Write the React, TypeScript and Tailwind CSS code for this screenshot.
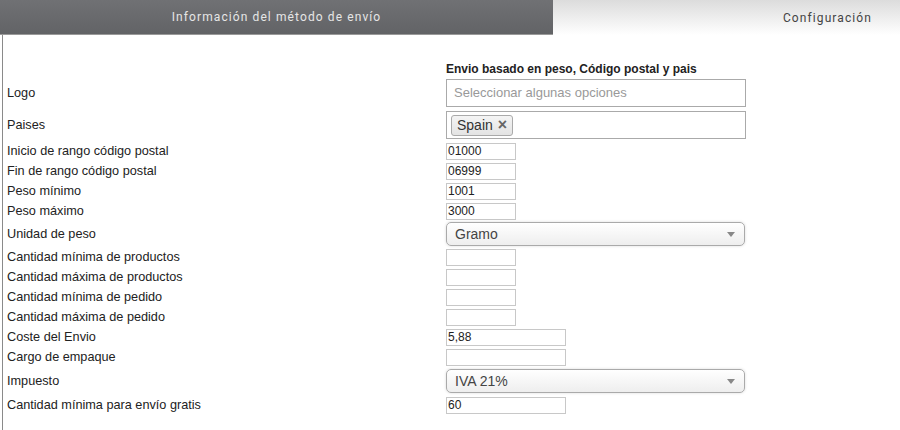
import React from 'react';

type Row = {
  label: string;
  kind: 'small' | 'medium' | 'select' | 'logo' | 'tags';
  value?: string;
  height: string;
};

const rows: Row[] = [
  { label: 'Logo', kind: 'logo', height: 'h-[32px]' },
  { label: 'Paises', kind: 'tags', height: 'h-[32px]' },
  { label: 'Inicio de rango código postal', kind: 'small', value: '01000', height: 'h-[20px]' },
  { label: 'Fin de rango código postal', kind: 'small', value: '06999', height: 'h-[20px]' },
  { label: 'Peso mínimo', kind: 'small', value: '1001', height: 'h-[20px]' },
  { label: 'Peso máximo', kind: 'small', value: '3000', height: 'h-[20px]' },
  { label: 'Unidad de peso', kind: 'select', value: 'Gramo', height: 'h-[26px]' },
  { label: 'Cantidad mínima de productos', kind: 'small', height: 'h-[20px]' },
  { label: 'Cantidad máxima de productos', kind: 'small', height: 'h-[20px]' },
  { label: 'Cantidad mínima de pedido', kind: 'small', height: 'h-[20px]' },
  { label: 'Cantidad máxima de pedido', kind: 'small', height: 'h-[20px]' },
  { label: 'Coste del Envio', kind: 'medium', value: '5,88', height: 'h-[20px]' },
  { label: 'Cargo de empaque', kind: 'medium', height: 'h-[20px]' },
  { label: 'Impuesto', kind: 'select', value: 'IVA 21%', height: 'h-[28px]' },
  { label: 'Cantidad mínima para envío gratis', kind: 'medium', value: '60', height: 'h-[20px]' },
];

const Control: React.FC<{ row: Row }> = ({ row }) => {
  if (row.kind === 'logo') {
    return (
      <div className="w-[300px] h-[28px] border border-[#aaaaaa] bg-white flex items-center px-[7px] text-[13px] text-[#999999]">
        Seleccionar algunas opciones
      </div>
    );
  }
  if (row.kind === 'tags') {
    return (
      <div className="w-[300px] h-[28px] border border-[#aaaaaa] bg-white flex items-center px-[4px]">
        <span className="flex items-center gap-[5px] h-[21px] px-[5px] rounded-[3px] border border-[#aaaaaa] bg-gradient-to-b from-[#f4f4f4] to-[#e4e4e4] text-[14px] text-[#333333]">
          Spain
          <span className="text-[16px] font-bold text-[#666666] leading-none">×</span>
        </span>
      </div>
    );
  }
  if (row.kind === 'select') {
    return (
      <div className="w-[299px] h-[24px] rounded-[5px] border border-[#aaaaaa] bg-gradient-to-b from-white to-[#eeeeee] shadow-[0_0_3px_rgba(0,0,0,0.15)] flex items-center justify-between pl-[8px] pr-[9px] text-[14px] text-[#444444]">
        <span>{row.value}</span>
        <span className="w-0 h-0 border-l-[4px] border-r-[4px] border-t-[5px] border-l-transparent border-r-transparent border-t-[#888888]" />
      </div>
    );
  }
  const width = row.kind === 'small' ? 'w-[70px]' : 'w-[120px]';
  return (
    <div className={`${width} h-[17px] border border-[#c8c8c8] bg-white flex items-center px-[1px] text-[12px] text-[#222222]`}>
      {row.value}
    </div>
  );
};

const App: React.FC = () => {
  return (
    <div className="w-[900px] h-[430px] bg-white overflow-hidden font-['Liberation_Sans',Arial,sans-serif]">
      <div className="flex h-[35px]">
        <div className="w-[553px] flex items-center justify-center bg-gradient-to-b from-[#707174] to-[#626366] border-b border-[#9a9a9a] text-[12px] tracking-[1.1px] text-[#e6e6e6] font-['Roboto',sans-serif]">
          Información del método de envío
        </div>
        <div className="flex-1 flex items-center justify-end pr-[28px] bg-gradient-to-b from-[#dcdcdc] to-white text-[12px] tracking-[1.1px] text-[#444444] font-['Roboto',sans-serif]">
          Configuración
        </div>
      </div>

      <div className="ml-[2px] border-l border-[#8a8a8a] h-[395px] pt-[26px]">
        <div className="flex h-[16px] items-center">
          <div className="w-[443px]" />
          <div className="text-[12px] font-bold text-[#222222]">Envio basado en peso, Código postal y pais</div>
        </div>
        {rows.map((row) => (
          <div key={row.label} className={`flex items-center ${row.height}`}>
            <div className="w-[443px] pl-[4px] pt-[2px] text-[12.7px] text-[#222222]">{row.label}</div>
            <Control row={row} />
          </div>
        ))}
      </div>
    </div>
  );
};

export default App;
